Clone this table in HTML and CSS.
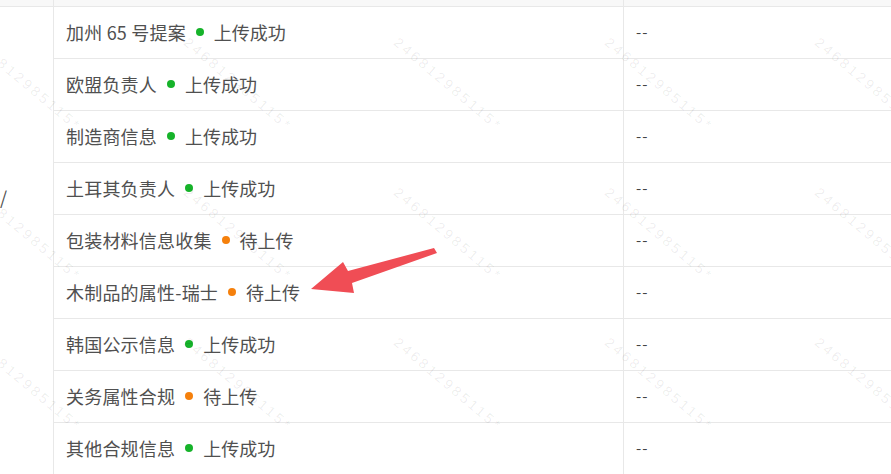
FILE: index.html
```html
<!DOCTYPE html>
<html lang="zh">
<head>
<meta charset="utf-8">
<link rel="stylesheet" href="styles.css">
</head>
<body>
<div class="page">
  <div class="table">
    <div class="head">
      <div class="hcell c1"></div>
      <div class="hcell c2"></div>
      <div class="hcell c3"></div>
    </div>
    <div class="body">
      <div class="merged">/</div>
      <div class="rows">
        <div class="row"><div class="cell c2"><span class="name">加州 65 号提案</span><span class="dot ok"></span><span class="status">上传成功</span></div><div class="cell c3">--</div></div>
        <div class="row"><div class="cell c2"><span class="name">欧盟负责人</span><span class="dot ok"></span><span class="status">上传成功</span></div><div class="cell c3">--</div></div>
        <div class="row"><div class="cell c2"><span class="name">制造商信息</span><span class="dot ok"></span><span class="status">上传成功</span></div><div class="cell c3">--</div></div>
        <div class="row"><div class="cell c2"><span class="name">土耳其负责人</span><span class="dot ok"></span><span class="status">上传成功</span></div><div class="cell c3">--</div></div>
        <div class="row"><div class="cell c2"><span class="name">包装材料信息收集</span><span class="dot wait"></span><span class="status">待上传</span></div><div class="cell c3">--</div></div>
        <div class="row"><div class="cell c2"><span class="name">木制品的属性-瑞士</span><span class="dot wait"></span><span class="status">待上传</span></div><div class="cell c3">--</div></div>
        <div class="row"><div class="cell c2"><span class="name">韩国公示信息</span><span class="dot ok"></span><span class="status">上传成功</span></div><div class="cell c3">--</div></div>
        <div class="row"><div class="cell c2"><span class="name">关务属性合规</span><span class="dot wait"></span><span class="status">待上传</span></div><div class="cell c3">--</div></div>
        <div class="row"><div class="cell c2"><span class="name">其他合规信息</span><span class="dot ok"></span><span class="status">上传成功</span></div><div class="cell c3">--</div></div>
      </div>
    </div>
  </div>

  <div class="watermarks" aria-hidden="true">
    <span class="wm">246812985115*</span><span class="wm">246812985115*</span><span class="wm">246812985115*</span><span class="wm">246812985115*</span><span class="wm">246812985115*</span>
    <span class="wm">246812985115*</span><span class="wm">246812985115*</span><span class="wm">246812985115*</span><span class="wm">246812985115*</span><span class="wm">246812985115*</span>
    <span class="wm">246812985115*</span><span class="wm">246812985115*</span><span class="wm">246812985115*</span><span class="wm">246812985115*</span><span class="wm">246812985115*</span>
  </div>

  <svg class="arrow" width="891" height="474" viewBox="0 0 891 474" aria-hidden="true">
    <polygon points="311,289 343,262 348,271 434,248 437,253 352,283 354,293" fill="#f04d55"/>
  </svg>
</div>
</body>
</html>
```

FILE: styles.css
```css
* { box-sizing: border-box; }

html, body {
  margin: 0;
  padding: 0;
  background: #ffffff;
}

body {
  font-family: "Noto Sans CJK SC", "Noto Sans", sans-serif;
  color: #505050;
  font-size: 18px;
}

.page {
  position: relative;
  width: 891px;
  height: 474px;
  overflow: hidden;
}

.table {
  display: flex;
  flex-direction: column;
  width: 1100px;
}

.head {
  display: flex;
  height: 7px;
  background: #f8f8f8;
  border-bottom: 1px solid #e8e8e8;
}

.hcell.c1 {
  width: 54px;
  border-right: 1px solid #e8e8e8;
}

.c2 {
  width: 570px;
  border-right: 1px solid #e8e8e8;
}

.c3 {
  flex: 1;
}

.body {
  display: flex;
}

.merged {
  width: 54px;
  border-right: 1px solid #e8e8e8;
  padding-top: 178px;
  line-height: 24px;
  flex-shrink: 0;
}

.rows {
  display: flex;
  flex-direction: column;
  flex: 1;
}

.row {
  display: flex;
  height: 52px;
  border-bottom: 1px solid #e8e8e8;
}

.cell {
  display: flex;
  align-items: center;
  line-height: 24px;
}

.cell.c2 {
  padding-left: 12px;
  padding-bottom: 1px;
}

.name {
  letter-spacing: 0.2px;
}

.cell.c3 {
  padding-left: 12px;
  padding-bottom: 1px;
  color: #444444;
  font-size: 15px;
  letter-spacing: 1px;
}

.dot {
  display: inline-block;
  width: 8px;
  height: 8px;
  border-radius: 50%;
  margin: 0 10px 0 10px;
}

.dot.ok { background: #16b32a; }
.dot.wait { background: #f5800c; }

.watermarks {
  position: absolute;
  left: -20px;
  top: 34px;
  display: grid;
  grid-template-columns: repeat(5, 210.5px);
  grid-auto-rows: 150px;
  pointer-events: none;
}

.wm {
  display: block;
  width: 160px;
  font-family: "Liberation Sans", sans-serif;
  font-size: 14px;
  letter-spacing: 3px;
  line-height: 16px;
  color: rgba(0, 0, 0, 0.075);
  white-space: nowrap;
  transform-origin: 0 0;
  transform: rotate(40deg);
}

.arrow {
  position: absolute;
  left: 0;
  top: 0;
  pointer-events: none;
}
```
